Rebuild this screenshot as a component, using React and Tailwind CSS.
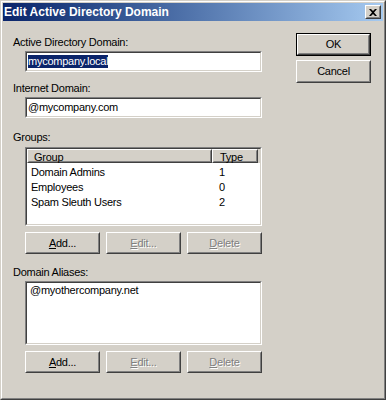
const Sunken = ({ className = '', children }) => (
  <div className={`border border-t-[#808080] border-l-[#808080] border-b-white border-r-white ${className}`}>
    <div className="h-full border border-t-[#404040] border-l-[#404040] border-b-[#d4d0c8] border-r-[#d4d0c8] bg-white overflow-hidden">
      {children}
    </div>
  </div>
);

const Raised = ({ className = '', children }) => (
  <div className={`border border-t-white border-l-white border-b-[#404040] border-r-[#404040] ${className}`}>
    <div className="h-full border border-t-[#d4d0c8] border-l-[#d4d0c8] border-b-[#808080] border-r-[#808080] bg-[#d4d0c8]">
      {children}
    </div>
  </div>
);

const Button = ({ children, disabled, isDefault, className = '' }) => {
  const label = (
    <div className="h-full flex items-center justify-center">
      <span className={disabled ? 'text-[#808080] [text-shadow:1px_1px_0_#fff]' : 'text-black'}>{children}</span>
    </div>
  );
  if (isDefault) {
    return (
      <div className={`border border-black ${className}`}>
        <Raised className="h-full">{label}</Raised>
      </div>
    );
  }
  return <Raised className={className}>{label}</Raised>;
};

const ButtonRow = () => (
  <div className="flex gap-[6px] ml-[12px] mt-[6px]">
    <Button className="w-[75px] h-[22px]"><u>A</u>dd...</Button>
    <Button disabled className="w-[75px] h-[22px]"><u>E</u>dit...</Button>
    <Button disabled className="w-[75px] h-[22px]"><u>D</u>elete</Button>
  </div>
);

const groups = [
  { name: 'Domain Admins', type: 1 },
  { name: 'Employees', type: 0 },
  { name: 'Spam Sleuth Users', type: 2 },
];

export default function App() {
  return (
    <div className="w-[386px] h-[400px] border border-t-[#d4d0c8] border-l-[#d4d0c8] border-r-[#404040] border-b-[#404040] bg-[#d4d0c8] font-['Liberation_Sans',Arial,sans-serif] text-[11px] leading-[13px] tracking-[-0.25px] text-black">
      <div className="h-full border border-t-white border-l-white border-r-[#808080] border-b-[#808080] p-px flex flex-col">
        {/* Title bar */}
        <div className="h-[18px] flex items-center pl-px pr-[2px] bg-gradient-to-r from-[#0a246a] to-[#a6caf0]">
          <span className="text-white font-bold text-[12px] tracking-normal">Edit Active Directory Domain</span>
          <Raised className="ml-auto w-[16px] h-[14px]">
            <div className="h-full flex items-center justify-center">
              <svg width="8" height="7" viewBox="0 0 8 7">
                <path d="M0 0h2l2 2 2-2h2L5 3.5 8 7H6L4 5 2 7H0l3-3.5z" fill="#000" />
              </svg>
            </div>
          </Raised>
        </div>

        <div className="flex">
          {/* Left column */}
          <div className="flex flex-col w-[249px] ml-[10px]">
            <div className="mt-[15px]">Active Directory Domain:</div>
            <Sunken className="mt-[2px] ml-[12px] h-[21px]">
              <div className="h-full flex items-center pl-px">
                <span className="bg-[#0a246a] text-white">mycompany.local</span>
              </div>
            </Sunken>

            <div className="mt-[10px]">Internet Domain:</div>
            <Sunken className="mt-[2px] ml-[12px] h-[21px]">
              <div className="h-full flex items-center pl-px">@mycompany.com</div>
            </Sunken>

            <div className="mt-[13px]">Groups:</div>
            <Sunken className="mt-[3px] ml-[12px] h-[79px]">
              <div className="flex h-[14px] leading-[12px]">
                <Raised className="w-[185px] h-full"><div className="pl-[5px]">Group</div></Raised>
                <Raised className="w-[46px] h-full"><div className="pl-[6px]">Type</div></Raised>
                <div className="flex-1 h-full bg-[#d4d0c8]" />
              </div>
              <div className="pt-[2px]">
                {groups.map((g) => (
                  <div key={g.name} className="flex h-[15px] items-center">
                    <div className="w-[185px] pl-[4px]">{g.name}</div>
                    <div className="pl-[7px]">{g.type}</div>
                  </div>
                ))}
              </div>
            </Sunken>
            <ButtonRow />

            <div className="mt-[12px]">Domain Aliases:</div>
            <Sunken className="mt-[2px] ml-[12px] h-[64px]">
              <div className="pl-[3px] pt-px">@myothercompany.net</div>
            </Sunken>
            <ButtonRow />
          </div>

          {/* Right column */}
          <div className="flex flex-col gap-[4px] ml-[34px] mt-[12px]">
            <Button isDefault className="w-[75px] h-[23px]">OK</Button>
            <Button className="w-[75px] h-[23px]">Cancel</Button>
          </div>
        </div>
      </div>
    </div>
  );
}
